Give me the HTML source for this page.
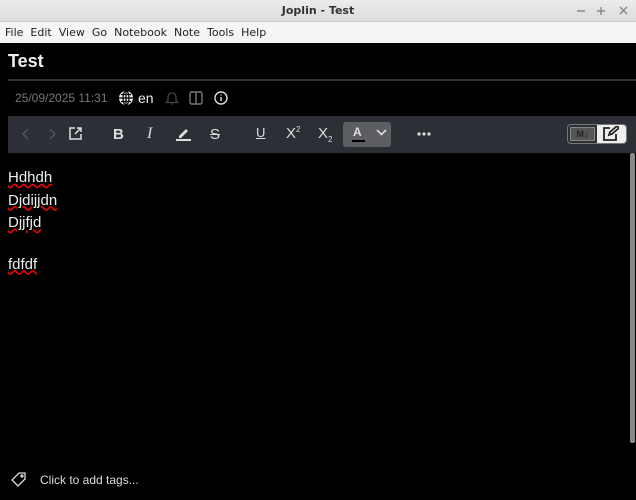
<!DOCTYPE html>
<html><head><style>
*{margin:0;padding:0;box-sizing:border-box}
body{width:636px;height:500px;background:#000;font-family:"Liberation Sans",sans-serif;position:relative;overflow:hidden}
.abs{position:absolute}
#tb{left:0;top:0;width:636px;height:22px;background:linear-gradient(#ececec,#dcdcdc);border-bottom:1px solid #cfcfcf;font-family:"DejaVu Sans",sans-serif;font-size:11px;font-weight:bold;color:#333;text-align:center;line-height:22px}
#menu{left:0;top:22px;width:636px;height:21px;background:#f6f5f4;font-family:"DejaVu Sans",sans-serif;font-size:11px;color:#222;line-height:21px;padding-left:5px}
#menu span{margin-right:7px}
.t{color:#eee}
svg{position:absolute}
</style></head><body>
<div id="tb" class="abs">Joplin - Test</div>
<svg style="left:574px;top:6px;width:60px;height:10px" width="60" height="10" viewBox="0 0 60 10" stroke="#888" stroke-width="1.4" fill="none"><path d="M3 5h8M27 1v8M23 5h8M46 1l7 7M53 1l-7 7"/></svg>
<div id="menu" class="abs"><span>File</span><span>Edit</span><span>View</span><span>Go</span><span>Notebook</span><span>Note</span><span>Tools</span><span>Help</span></div>
<div class="abs" style="left:8px;top:51px;font-size:18px;font-weight:bold;color:#eee">Test</div>
<div class="abs" style="left:8px;top:79px;width:628px;height:2px;background:#2f3035"></div>
<div class="abs" style="left:15px;top:91px;font-size:12px;color:#777">25/09/2025 11:31</div>
<svg style="left:118px;top:90px" width="16" height="16" viewBox="0 0 16 16"><circle cx="8" cy="8" r="7" fill="#eee"/><path d="M1 8h14M8 1v14M3 4.5h10M3 11.5h10" stroke="#000" stroke-width="1.2"/><ellipse cx="8" cy="8" rx="3" ry="7" fill="none" stroke="#000" stroke-width="1.2"/></svg>
<div class="abs" style="left:138px;top:90px;font-size:14px;color:#eee">en</div>
<svg style="left:164px;top:90px" width="16" height="16" viewBox="0 0 16 16" fill="none" stroke="#444" stroke-width="1.3"><path d="M4 11V7a4 4 0 0 1 8 0v4l1.5 1.5h-11z M7 14h2"/></svg>
<svg style="left:189px;top:91px" width="14" height="14" viewBox="0 0 14 14" fill="none" stroke="#777" stroke-width="1.4"><rect x="1" y="1" width="12" height="12" rx="1.5"/><path d="M7 1v12"/></svg>
<svg style="left:214px;top:91px" width="14" height="14" viewBox="0 0 14 14" fill="none" stroke="#ddd" stroke-width="1.4"><circle cx="7" cy="7" r="6"/><path d="M7 6v4M7 3.5v1"/></svg>
<div class="abs" style="left:8px;top:116px;width:628px;height:37px;background:#2d2f36"></div>
<svg style="left:22px;top:128px" width="34" height="12" viewBox="0 0 34 12" fill="none" stroke="#555" stroke-width="1.4"><path d="M6 1L1 6l5 5M28 1l5 5-5 5"/></svg>
<svg style="left:69px;top:127px" width="13" height="13" viewBox="0 0 13 13" fill="none" stroke="#ddd" stroke-width="1.5"><path d="M6 1H1v11h11V7M8 1h4v4M12 1L6 7"/></svg>
<div class="abs" style="left:113px;top:126px;font-size:15px;font-weight:bold;color:#ddd">B</div>
<div class="abs" style="left:147px;top:125px;font-size:16px;font-style:italic;font-family:'Liberation Serif',serif;color:#ddd">I</div>
<svg style="left:176px;top:126px" width="15" height="15" viewBox="0 0 15 15"><path d="M3 10l7-7 2 2-7 7H3z" fill="#ddd"/><rect x="0" y="13" width="15" height="2" fill="#ddd"/></svg>
<div class="abs" style="left:210px;top:126px;font-size:15px;color:#ddd;text-decoration:line-through">S</div>
<div class="abs" style="left:256px;top:125px;font-size:13px;color:#ddd;text-decoration:underline">U</div>
<div class="abs" style="left:286px;top:125px;font-size:15px;color:#ddd">X<sup style="font-size:8px">2</sup></div>
<div class="abs" style="left:318px;top:125px;font-size:15px;color:#ddd">X<sub style="font-size:8px">2</sub></div>
<div class="abs" style="left:343px;top:122px;width:48px;height:25px;background:#5d5e62;border-radius:3px"></div>
<div class="abs" style="left:353px;top:125px;font-size:12px;color:#ddd;font-weight:bold">A</div>
<div class="abs" style="left:352px;top:140px;width:13px;height:2px;background:#000"></div>
<svg style="left:376px;top:129px" width="11" height="8" viewBox="0 0 11 8" fill="none" stroke="#ddd" stroke-width="1.6"><path d="M1 1l4.5 4.5L10 1"/></svg>
<svg style="left:417px;top:132px" width="14" height="4" viewBox="0 0 14 4" fill="#ddd"><circle cx="2" cy="2" r="1.6"/><circle cx="7" cy="2" r="1.6"/><circle cx="12" cy="2" r="1.6"/></svg>
<div class="abs" style="left:567px;top:124px;width:60px;height:20px;border:1px solid #777;border-radius:4px;background:#2d2f36"></div>
<div class="abs" style="left:570px;top:127px;width:25px;height:14px;background:#555;border:1px solid #888;font-size:9px;font-weight:bold;color:#222;text-align:center;line-height:12px">M↓</div>
<div class="abs" style="left:597px;top:125px;width:29px;height:18px;background:#eee;border-radius:0 3px 3px 0"></div>
<svg style="left:603px;top:126px" width="16" height="15" viewBox="0 0 16 15" fill="none" stroke="#222" stroke-width="1.8"><path d="M7 2H1v12h12V8M6 9l1-3 7-6 2 2-7 6z"/></svg>
<div class="abs" style="left:630px;top:153px;width:5px;height:290px;background:#888;border-radius:2px"></div>
<div class="abs t" style="left:8px;top:167px;font-size:15px;line-height:22.5px">
<div style="text-decoration:underline wavy red">Hdhdh</div>
<div style="text-decoration:underline wavy red">Djdijjdn</div>
<div style="text-decoration:underline wavy red">Djjfjd</div>
<div style="height:19px"></div>
<div style="text-decoration:underline wavy red">fdfdf</div>
</div>
<svg style="left:11px;top:472px" width="16" height="16" viewBox="0 0 16 16" fill="none" stroke="#ddd" stroke-width="1.3"><path d="M8 1h6v6l-7 7-6-6z"/><circle cx="11" cy="4" r="1"/></svg>
<div class="abs" style="left:40px;top:473px;font-size:12px;color:#ddd">Click to add tags...</div>
</body></html>
